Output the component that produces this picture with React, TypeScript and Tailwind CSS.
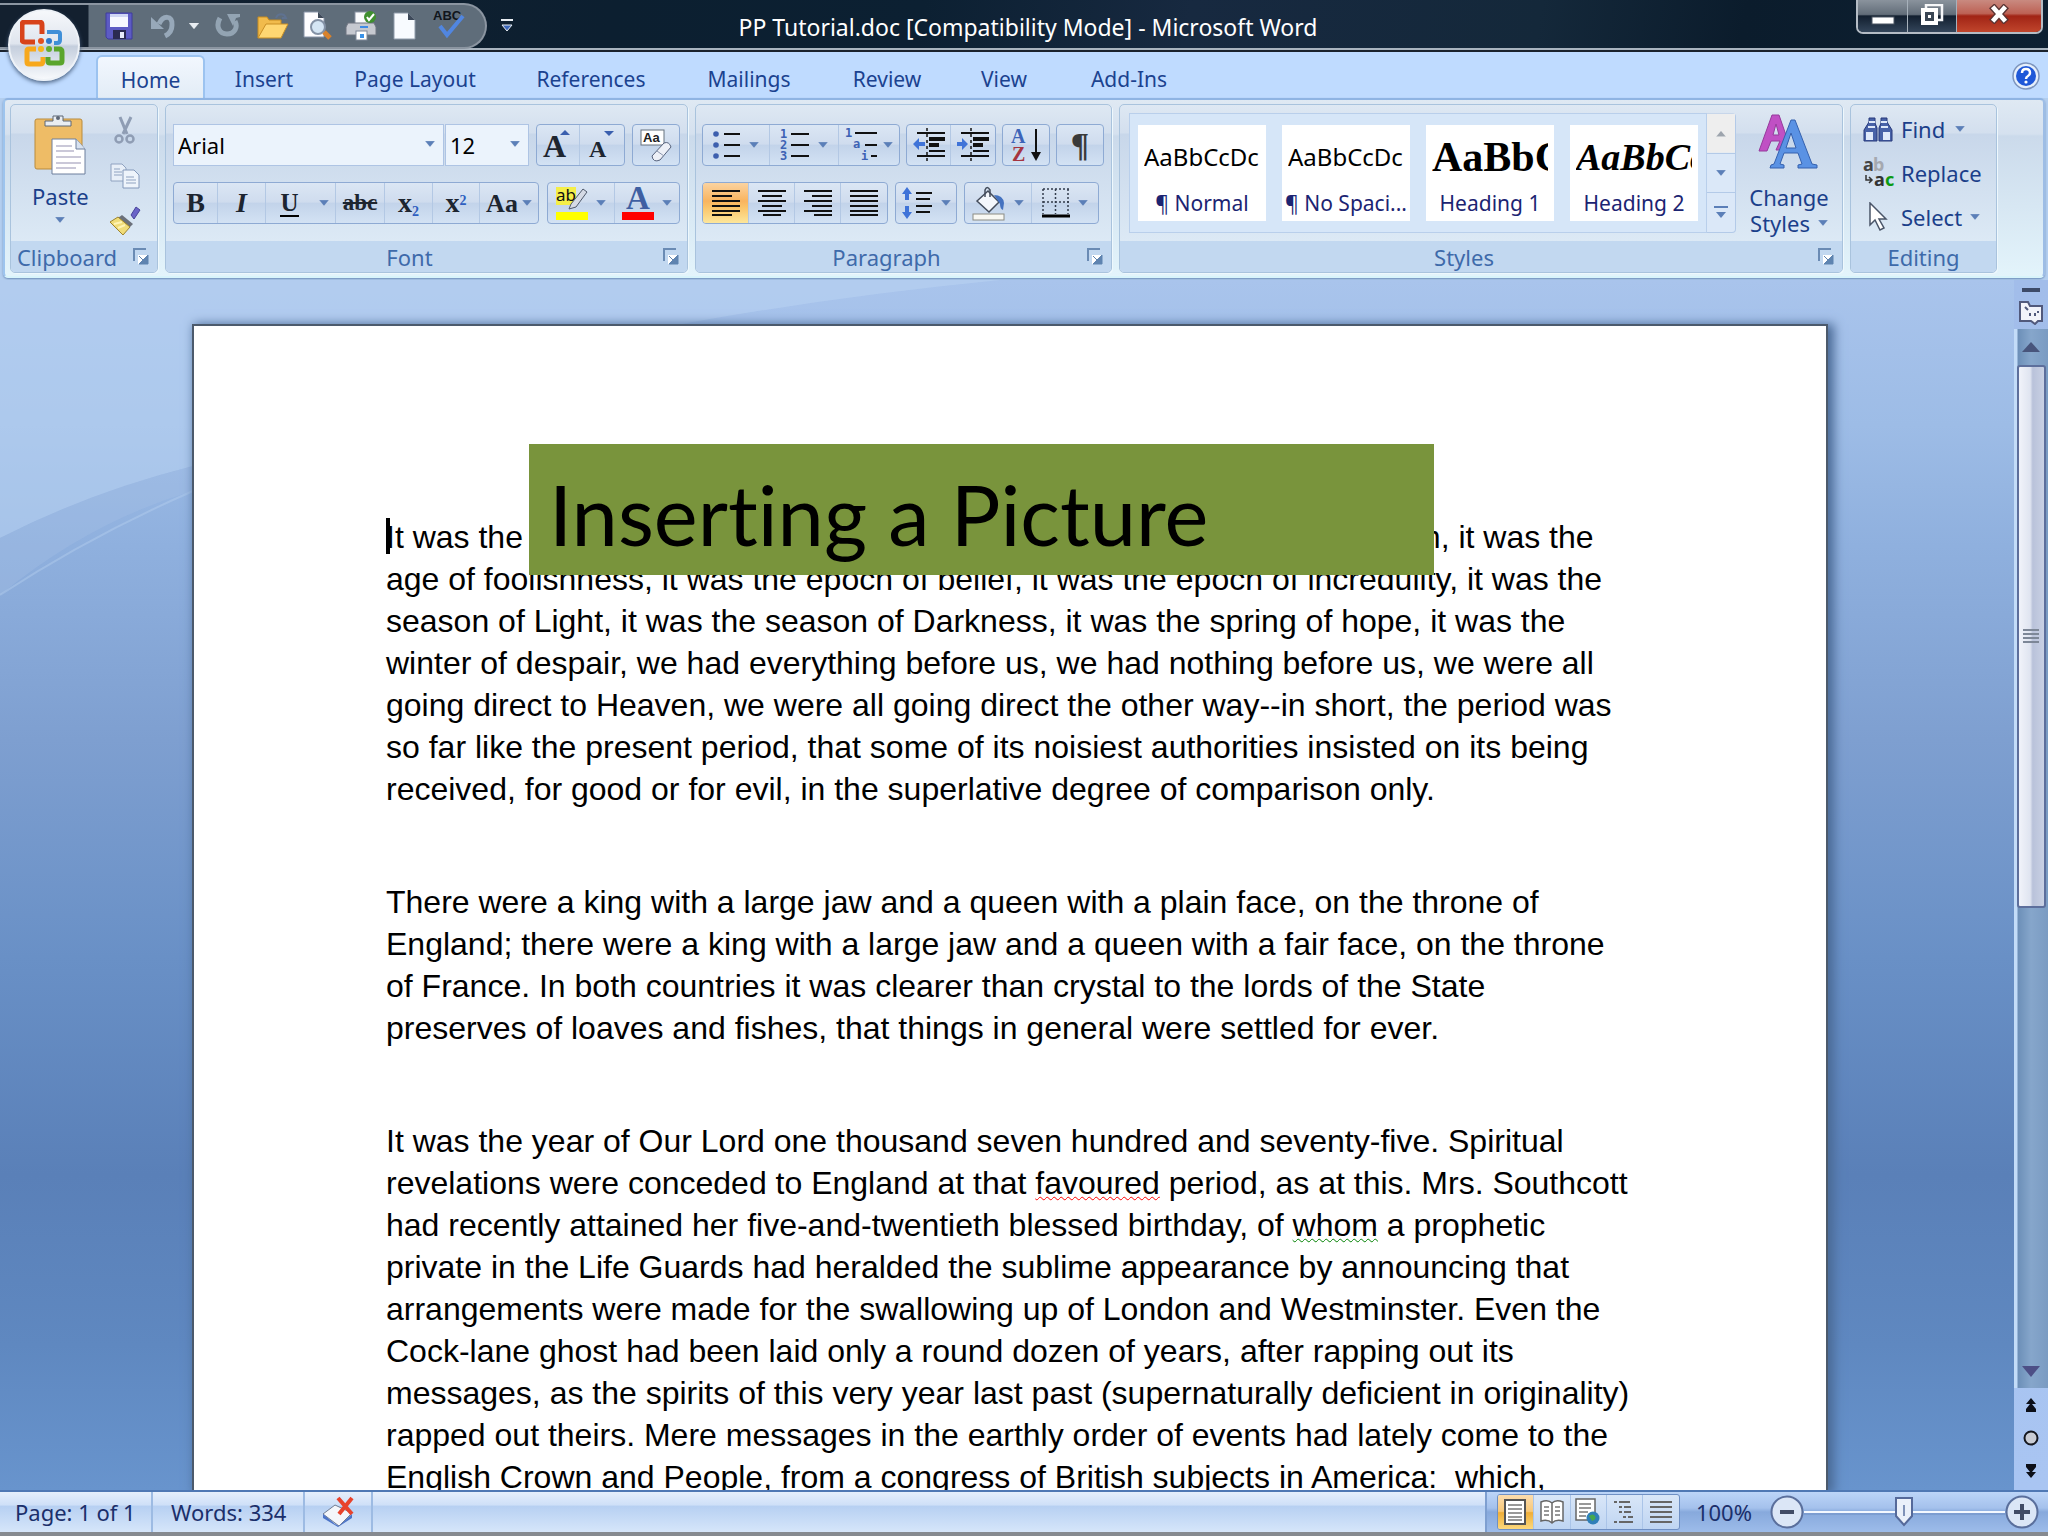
import { useState } from 'react';
import type { ReactNode } from 'react';

const tabs = ['Home', 'Insert', 'Page Layout', 'References', 'Mailings', 'Review', 'View', 'Add-Ins'];

const styleCards = [
  { name: '¶ Normal', sample: 'AaBbCcDc', font: 'font-["Noto_Sans",sans-serif] text-[24px]' },
  { name: '¶ No Spaci...', sample: 'AaBbCcDc', font: 'font-["Noto_Sans",sans-serif] text-[24px]' },
  { name: 'Heading 1', sample: 'AaBbCc', font: 'font-["Liberation_Serif",serif] text-[42px] font-bold' },
  { name: 'Heading 2', sample: 'AaBbCc', font: 'font-["Liberation_Serif",serif] text-[38px] font-bold italic' },
];

const paragraphs: ReactNode[][] = [
  [
    'It was the best of times, it was the worst of times, it was the age of wisdom, it was the',
    'age of foolishness, it was the epoch of belief, it was the epoch of incredulity, it was the',
    'season of Light, it was the season of Darkness, it was the spring of hope, it was the',
    'winter of despair, we had everything before us, we had nothing before us, we were all',
    'going direct to Heaven, we were all going direct the other way--in short, the period was',
    'so far like the present period, that some of its noisiest authorities insisted on its being',
    'received, for good or for evil, in the superlative degree of comparison only.',
  ],
  [
    'There were a king with a large jaw and a queen with a plain face, on the throne of',
    'England; there were a king with a large jaw and a queen with a fair face, on the throne',
    'of France. In both countries it was clearer than crystal to the lords of the State',
    'preserves of loaves and fishes, that things in general were settled for ever.',
  ],
  [
    'It was the year of Our Lord one thousand seven hundred and seventy-five. Spiritual',
    <>
      revelations were conceded to England at that{' '}
      <span className="underline decoration-wavy decoration-[#ff0000] decoration-1 underline-offset-2">favoured</span> period, as at this. Mrs. Southcott
    </>,
    <>
      had recently attained her five-and-twentieth blessed birthday, of{' '}
      <span className="underline decoration-wavy decoration-[#008000] decoration-1 underline-offset-2">whom</span> a prophetic
    </>,
    'private in the Life Guards had heralded the sublime appearance by announcing that',
    'arrangements were made for the swallowing up of London and Westminster. Even the',
    'Cock-lane ghost had been laid only a round dozen of years, after rapping out its',
    'messages, as the spirits of this very year last past (supernaturally deficient in originality)',
    'rapped out theirs. Mere messages in the earthly order of events had lately come to the',
    'English Crown and People, from a congress of British subjects in America:  which,',
  ],
];

function Caret({ color = '#5b7fb8' }: { color?: string }) {
  return (
    <svg width="10" height="7" viewBox="0 0 10 7" className="shrink-0">
      <path d="M0 0h10L5 6z" fill={color} />
      <path d="M0 0h10L5 6z" fill="none" stroke="#ffffff" strokeOpacity=".35" strokeWidth=".6" />
    </svg>
  );
}

/* ---------- quick access icons ---------- */

function SaveIcon() {
  return (
    <svg width="28" height="28" viewBox="0 0 28 28">
      <path d="M1 1h26v26H3l-2-2z" fill="#5d5bc4" stroke="#3f3d9c" />
      <rect x="5" y="2" width="18" height="13" fill="#f6f8ff" />
      <rect x="5" y="2" width="18" height="3" fill="#cfd6f4" />
      <rect x="8" y="18" width="13" height="9" fill="#2b2a52" />
      <rect x="15" y="20" width="4" height="6" fill="#e8ebfa" />
    </svg>
  );
}

function UndoIcon() {
  return (
    <svg width="26" height="28" viewBox="0 0 26 28">
      <path d="M8 12C12 3 22 3 21 13c0 5-3 9-7 11" fill="none" stroke="#97a8b9" strokeWidth="5" />
      <path d="M0 5v12h13z" fill="#97a8b9" />
    </svg>
  );
}

function RedoIcon() {
  return (
    <svg width="26" height="28" viewBox="0 0 26 28">
      <path d="M5 6C0 15 5 22 12 22c8 0 11-7 8-13" fill="none" stroke="#93a4b3" strokeWidth="5" />
      <path d="M12 2h13v3l-4 1-3 8z" fill="#93a4b3" />
    </svg>
  );
}

function FolderIcon() {
  return (
    <svg width="32" height="28" viewBox="0 0 32 28">
      <path d="M19 6c2-5 8-5 10 0l-4 0" fill="none" stroke="#5f7290" strokeWidth="2" />
      <path d="M1 26V5h9l2 3h12v5" fill="#f1bb4c" stroke="#c68c20" />
      <path d="M1 26 9 12h22l-7 14z" fill="#ffd772" stroke="#c98f25" />
    </svg>
  );
}

function PreviewIcon() {
  return (
    <svg width="30" height="30" viewBox="0 0 30 30">
      <path d="M1 1h14l6 6v19H1z" fill="#fdfdff" stroke="#8894a8" />
      <path d="M15 1v6h6z" fill="#3f4a59" />
      <circle cx="15" cy="16" r="7" fill="#cfe2f3" fillOpacity=".9" stroke="#8492a6" strokeWidth="2" />
      <path d="m21 21 6 6" stroke="#d9822b" strokeWidth="5" />
    </svg>
  );
}

function PrintIcon() {
  return (
    <svg width="32" height="30" viewBox="0 0 32 30">
      <rect x="10" y="1" width="13" height="12" fill="#fafbfd" stroke="#8a94a3" />
      <path d="M3 12h26l2 4v8H1v-8z" fill="#c6c9d0" stroke="#6e7480" />
      <rect x="15" y="15" width="8" height="2" fill="#3f8be6" />
      <rect x="11" y="20" width="11" height="9" fill="#fff" stroke="#7e8898" />
      <rect x="15" y="23" width="4" height="4" fill="#3a92e8" />
      <circle cx="25" cy="6" r="6" fill="#3f8f2f" />
      <path d="m22 6 2 3 5-6" fill="none" stroke="#fff" strokeWidth="2" />
    </svg>
  );
}

function NewIcon() {
  return (
    <svg width="24" height="30" viewBox="0 0 24 30">
      <path d="M1 2h14l7 7v19H1z" fill="#f8fbff" stroke="#909cab" />
      <path d="M15 2v7h7z" fill="#3e4a5a" />
    </svg>
  );
}

function SpellIcon() {
  return (
    <span className="relative block h-[28px] w-[34px]">
      <span className="absolute -top-1 left-0 font-['Liberation_Sans',sans-serif] text-[13px] leading-[16px] font-bold text-[#10151c]">ABC</span>
      <svg width="34" height="28" viewBox="0 0 34 28" className="absolute top-0 left-0">
        <path d="m7 14 7 9L30 4" fill="none" stroke="#5186e0" strokeWidth="4" />
      </svg>
    </span>
  );
}

/* ---------- ribbon icons ---------- */

function PasteIcon() {
  return (
    <svg width="52" height="62" viewBox="0 0 52 62">
      <rect x="1" y="6" width="47" height="50" rx="2" fill="#eebc66" stroke="#b98b3d" />
      <path d="M11 13V8h8V3h10v5h8v5z" fill="#e9edf2" stroke="#5d6675" />
      <circle cx="24" cy="5" r="2" fill="#5d6675" />
      <path d="M18 26h24l9 10v25H18z" fill="#fff" stroke="#6d7f9c" />
      <path d="M42 26v10h9" fill="#d7e2f0" stroke="#6d7f9c" />
      <path d="M22 33h16M22 38h18M22 44h25M22 50h25M22 55h20" stroke="#b9b6cc" strokeWidth="1.5" />
    </svg>
  );
}

function CutIcon() {
  return (
    <svg width="22" height="30" viewBox="0 0 22 30">
      <path d="M6 1l7 17M17 1 9 18" stroke="#8f9db4" strokeWidth="3" />
      <circle cx="5" cy="23" r="3.5" fill="none" stroke="#8f9db4" strokeWidth="2.5" />
      <circle cx="16" cy="23" r="3.5" fill="none" stroke="#8f9db4" strokeWidth="2.5" />
    </svg>
  );
}

function CopyIcon() {
  return (
    <svg width="30" height="26" viewBox="0 0 30 26">
      <path d="M1 1h11l4 4v13H1z" fill="#e8eff8" stroke="#8fa2c0" />
      <path d="M13 7h11l5 5v13H13z" fill="#eef4fb" stroke="#8398ba" />
      <path d="M4 6h6M4 9h8M4 12h8M16 14h8M16 17h10M16 20h10" stroke="#8fa2c0" />
    </svg>
  );
}

function PainterIcon() {
  return (
    <svg width="32" height="30" viewBox="0 0 32 30">
      <path d="M22 9l5-8 4 3-6 9z" fill="#6a64c8" stroke="#484499" />
      <path d="M13 9l11 9-4 4L9 12z" fill="#6b707a" />
      <path d="M9 11 1 16l13 13 7-8z" fill="#f0dc78" stroke="#9e842c" />
      <path d="m5 18 8-2M9 22l7-3" stroke="#fff3b4" strokeWidth="2" />
    </svg>
  );
}

function EraserIcon() {
  return (
    <svg width="32" height="36" viewBox="0 0 32 36">
      <rect x="1" y="3" width="23" height="15" fill="#fff" stroke="#67727f" />
      <text x="3" y="15" className="font-['Liberation_Sans',sans-serif] text-[13px] font-bold" fill="#222">
        Aa
      </text>
      <path d="m12 29 12-13q5-2 7 4L20 33q-7 3-8-4z" fill="#edf0f7" stroke="#56627c" />
      <path d="m17 24 7 5" stroke="#8a95ad" />
    </svg>
  );
}

function BulletsIcon() {
  return (
    <svg width="28" height="30" viewBox="0 0 28 30">
      <path d="M11 4h16M11 15h16M11 26h16" stroke="#111" strokeWidth="2" />
      <circle cx="3" cy="4" r="2.8" fill="#3d5fae" />
      <circle cx="3" cy="15" r="2.8" fill="#3d5fae" />
      <circle cx="3" cy="26" r="2.8" fill="#3d5fae" />
    </svg>
  );
}

function NumberingIcon() {
  return (
    <svg width="30" height="32" viewBox="0 0 30 32" fill="#3d62b4" className="font-['DejaVu_Sans_Mono',monospace] text-[12px] font-bold">
      <path d="M11 5h18M11 16h18M11 27h18" stroke="#111" strokeWidth="2" />
      <text x="0" y="9">1</text>
      <text x="0" y="20">2</text>
      <text x="0" y="31">3</text>
    </svg>
  );
}

function MultilevelIcon() {
  return (
    <svg width="34" height="34" viewBox="0 0 34 34" fill="#3d62b4" className="font-['DejaVu_Sans_Mono',monospace] text-[12px] font-bold">
      <path d="M10 5h22M20 17h12M26 28h6" stroke="#111" strokeWidth="2" />
      <text x="0" y="9">1</text>
      <text x="8" y="20">a</text>
      <text x="16" y="32">i</text>
    </svg>
  );
}

function IndentIcon({ flip = false }: { flip?: boolean }) {
  return (
    <svg width="34" height="34" viewBox="0 0 34 34">
      <path d="M5 5h28M17 17h10M17 23h16M5 28h28" stroke="#111" strokeWidth="2" />
      <path d="M17 11h16M17 17h10" stroke="#111" strokeWidth="4" />
      <path d="M15 0v34" stroke="#111" strokeWidth="1.5" strokeDasharray="3 3" />
      <path d={flip ? 'M12 16 6 10v4H1v4h5v4z' : 'M1 16l6-6v4h6v4H7v4z'} fill="#3f73d8" />
    </svg>
  );
}

function SortIcon() {
  return (
    <svg width="30" height="36" viewBox="0 0 30 36" className="font-['Liberation_Serif',serif] text-[20px] font-bold">
      <text x="0" y="16" fill="#3c64b8">A</text>
      <text x="1" y="34" fill="#a53440">Z</text>
      <path d="M25 2v26" stroke="#111" strokeWidth="2" />
      <path d="M20 25h10l-5 9z" fill="#111" />
    </svg>
  );
}

const alignLines: Record<string, string> = {
  left: 'M0 1h28M0 6h20M0 11h28M0 16h28M0 21h28M0 25h20',
  center: 'M0 1h28M4 6h20M0 11h28M4 16h20M0 21h28M5 25h18',
  right: 'M0 1h28M8 6h20M0 11h28M8 16h20M0 21h28M10 25h18',
  justify: 'M0 1h28M0 6h28M0 11h28M0 16h28M0 21h28M0 25h28',
};

function AlignIcon({ kind }: { kind: string }) {
  return (
    <svg width="28" height="27" viewBox="0 0 28 27">
      <path d={alignLines[kind]} stroke="#111" strokeWidth="2" />
    </svg>
  );
}

function SpacingIcon() {
  return (
    <svg width="32" height="34" viewBox="0 0 32 34">
      <path d="M15 7h16M15 13h14M15 20h16M15 26h14" stroke="#111" strokeWidth="2" />
      <path d="M6 1 1 8h3v6h4V8h3zM6 33l-5-7h3v-6h4v6h3z" fill="#3f73d8" />
    </svg>
  );
}

function ShadingIcon() {
  return (
    <svg width="34" height="36" viewBox="0 0 34 36">
      <path d="m5 16 11-10 11 11-10 10z" fill="#f4f7fc" stroke="#444d5c" strokeWidth="1.5" />
      <path d="M13 12V5q2-5 5 0v7" fill="none" stroke="#444d5c" strokeWidth="1.5" />
      <path d="M22 10q9 0 10 8l-1 7q-3-1-3-6z" fill="#4472c0" />
      <rect x="1" y="29" width="31" height="6" fill="#f8f8f3" stroke="#8c8c84" />
    </svg>
  );
}

function BordersIcon() {
  return (
    <svg width="28" height="30" viewBox="0 0 28 30">
      <path d="M1 1v25M13.5 1v25M26 1v25M1 1h26M1 14h26" stroke="#333c4c" strokeWidth="1.5" strokeDasharray="2 2" />
      <path d="M0 28h28" stroke="#000" strokeWidth="3" />
    </svg>
  );
}

function HighlightIcon() {
  return (
    <svg width="32" height="34" viewBox="0 0 32 34">
      <rect x="0" y="1" width="20" height="18" fill="#f4ee48" />
      <text x="0" y="15" className="font-['Noto_Sans',sans-serif] text-[17px] font-normal" fill="#111">
        ab
      </text>
      <path d="m15 18 12-15 4 3-11 15-7 2z" fill="#d5dae5" stroke="#4f596b" />
      <rect x="0" y="26" width="32" height="8" fill="#ffff00" />
    </svg>
  );
}

function FontColorIcon() {
  return (
    <svg width="32" height="36" viewBox="0 0 32 36">
      <text x="16" y="24" textAnchor="middle" className="font-['Liberation_Serif',serif] text-[33px] font-bold" fill="#3f5fa2">
        A
      </text>
      <rect x="0" y="27" width="32" height="8" fill="#ff0000" />
    </svg>
  );
}

function ChangeStylesIcon() {
  return (
    <svg width="62" height="58" viewBox="0 0 62 58">
      <path d="M1 38 14 2h7l9 26-5 9-7 0 4-9H13l-4 10zM15 22h6l-3-11z" fill="#c050c4" stroke="#963a9c" />
      <path d="M13 52l3-1L33 7h4l17 44 5 1v3H40v-3l4-1-4-11H26l-4 11 4 1v3H12zM28 35h10l-5-15z" fill="#5a92e4" stroke="#3561ae" />
    </svg>
  );
}

function FindIcon() {
  return (
    <svg width="30" height="28" viewBox="0 0 30 28">
      <path d="M1 26V15l5-8V3h6v5l2 5v13zM29 26V15l-5-8V3h-6v5l-2 5v13z" fill="#4862a8" stroke="#26387a" />
      <rect x="3" y="17" width="7" height="8" fill="#dfe9fa" />
      <rect x="20" y="17" width="7" height="8" fill="#dfe9fa" />
      <path d="M6 7h6M18 7h6M5 12h7M18 12h7" stroke="#dfe9fa" strokeWidth="2" />
    </svg>
  );
}

function ReplaceIcon() {
  return (
    <svg width="32" height="32" viewBox="0 0 32 32" className="font-['Noto_Sans',sans-serif] text-[18px] font-bold">
      <text x="0" y="14" fill="#444">a</text>
      <text x="10" y="14" fill="#a5a9b0">b</text>
      <text x="11" y="29" fill="#333">a</text>
      <text x="22" y="29" fill="#0b9a12">c</text>
      <path d="M3 18v5h5M6 20l3 3-3 3" fill="none" stroke="#333" strokeWidth="1.5" />
    </svg>
  );
}

function SelectIcon() {
  return (
    <svg width="22" height="30" viewBox="0 0 22 30">
      <path d="M2 1v22l5-5 5 10 4-2-5-9h7z" fill="#fff" stroke="#4a5568" strokeWidth="1.5" />
    </svg>
  );
}

function OfficeLogo() {
  return (
    <svg width="48" height="50" viewBox="0 0 48 50" fill="none">
      <path d="M15 22H5Q2 22 2 19V5q0-3 3-3h14q3 0 3 3v9" stroke="#d8431b" strokeWidth="5" />
      <path d="M27 12h11q2 0 2 2v6q0 3-3 3h-3" stroke="#3f8fd8" strokeWidth="4" />
      <path d="M16 29H9q-2 0-2 2v11q0 2 2 2h11q3 0 3-3v-4" stroke="#f7a81c" strokeWidth="5" />
      <path d="M34 29h5q3 0 3 3v9q0 2-2 2H30q-2 0-2-2v-4" stroke="#5aa52c" strokeWidth="5" />
      <circle cx="21" cy="21" r="3" fill="#e2501e" />
      <circle cx="29" cy="21" r="3" fill="#2c78cc" />
      <circle cx="21" cy="29" r="3" fill="#f7b61c" />
      <circle cx="29" cy="29" r="3" fill="#63ad2e" />
    </svg>
  );
}

/* ---------- building blocks ---------- */

function ButtonSet({ children }: { children: ReactNode }) {
  return (
    <div className="flex h-[42px] divide-x divide-[#b3c8e4] overflow-hidden rounded-[4px] border border-[#8eaad3] bg-[linear-gradient(to_bottom,#dbe6f4_0%,#cfdcee_48%,#c2d3ea_50%,#d3e2f4_100%)]">
      {children}
    </div>
  );
}

function Tool({ label, width, children }: { label: string; width: string; children: ReactNode }) {
  return (
    <button aria-label={label} className={`flex items-center justify-center gap-2 ${width}`}>
      {children}
    </button>
  );
}

function Group({ title, width, launcher, children }: { title: string; width: string; launcher?: boolean; children: ReactNode }) {
  return (
    <section
      aria-label={title}
      className={`flex h-[169px] flex-col rounded-[5px] border border-[#a9c3dd] bg-[linear-gradient(to_bottom,#dee8f3_0px,#d3dfee_28px,#c8d7ea_29px,#dce9f5_136px)] shadow-[1px_1px_0_#eef8fd] ${width}`}
    >
      <div className="flex-1">{children}</div>
      <footer className="flex h-[31px] items-center rounded-b-[4px] bg-[#c2d8f0] px-1">
        <span className="flex-1 text-center text-[22px] leading-[28px] text-[#3e6aaa]">{title}</span>
        {launcher && (
          <button aria-label={`${title} options`} className="pr-1 pl-[14px]">
            <svg width="16" height="17" viewBox="0 0 16 17">
              <path d="M1 13V1h12" fill="none" stroke="#6a8bb4" strokeWidth="2" />
              <path d="M5 7h9v9H5z" fill="#fff" />
              <path d="m6 8 4 4M15 7v9H6z" fill="#5f84b0" stroke="#5f84b0" />
            </svg>
          </button>
        )}
      </footer>
    </section>
  );
}

function ComboBox({ label, value, width }: { label: string; value: string; width: string }) {
  return (
    <div className={`relative ${width}`}>
      <select aria-label={label} className="h-[42px] w-full appearance-none border border-[#aec4e4] bg-[#ebf3fc] pl-1 text-[22px] text-black" defaultValue={value}>
        <option>{value}</option>
      </select>
      <span className="pointer-events-none absolute top-[17px] right-[9px]">
        <Caret />
      </span>
    </div>
  );
}

/* ---------- page parts ---------- */

function TitleBar() {
  return (
    <header className="relative flex h-[52px] shrink-0 items-start justify-between border-b-2 border-[#1a222c] bg-[linear-gradient(100deg,#13202f_0%,#0c1f30_30%,#0c2032_45%,#172940_58%,#14283a_75%,#0b1c2c_85%,#0d2032_100%)] shadow-[inset_0_-2px_0_#a9b4bf]">
      <div className="flex h-[50px] items-center pt-[2px]">
        <div className="flex h-[46px] w-[487px] items-center rounded-r-[24px] border-2 border-l-0 border-[#8b95a1] bg-[linear-gradient(to_right,#13202f_0px,#13202f_88px,#5f6d7a_89px)] pl-[105px]">
          <button aria-label="Save"><SaveIcon /></button>
          <button aria-label="Undo" className="ml-[18px]"><UndoIcon /></button>
          <button aria-label="Undo list" className="ml-[12px]"><Caret color="#e8edf2" /></button>
          <button aria-label="Repeat" className="ml-[16px]"><RedoIcon /></button>
          <button aria-label="Open" className="ml-[16px]"><FolderIcon /></button>
          <button aria-label="Print Preview" className="ml-[14px]"><PreviewIcon /></button>
          <button aria-label="Quick Print" className="ml-[12px]"><PrintIcon /></button>
          <button aria-label="New" className="ml-[16px]"><NewIcon /></button>
          <button aria-label="Spelling" className="ml-[16px]"><SpellIcon /></button>
        </div>
        <button aria-label="Customize Quick Access Toolbar" className="ml-[14px]">
          <svg width="12" height="14" viewBox="0 0 12 14">
            <path d="M0 1h12" stroke="#e8edf2" strokeWidth="2" />
            <path d="M1 6h10l-5 6z" fill="#3b66b8" stroke="#e8edf2" />
          </svg>
        </button>
      </div>
      <h1 className="absolute inset-x-0 top-[11px] mx-auto w-fit pl-2 text-[23px] leading-[32px] whitespace-pre text-white">
        PP Tutorial.doc [Compatibility Mode] - Microsoft Word
      </h1>
      <div className="mr-[5px] flex h-[34px] divide-x divide-[#a7b1bb] overflow-hidden rounded-b-[7px] border-2 border-t-0 border-[#b4bcc5]">
        <button aria-label="Minimize" className="flex w-[50px] items-end justify-center bg-[linear-gradient(to_bottom,#8a939d_0%,#626d79_45%,#121f2f_50%,#33455a_100%)] pb-[7px]">
          <svg width="24" height="9" viewBox="0 0 24 9">
            <rect x="1" y="1" width="22" height="7" fill="#fff" stroke="#4a5562" />
          </svg>
        </button>
        <button aria-label="Restore" className="flex w-[49px] items-center justify-center bg-[linear-gradient(to_bottom,#8a939d_0%,#626d79_45%,#121f2f_50%,#33455a_100%)] pb-[3px]">
          <svg width="24" height="22" viewBox="0 0 24 22">
            <path d="M6 4V1h16v15h-4" fill="none" stroke="#f5f6f8" strokeWidth="2.5" />
            <path d="M3 6h13v13H3z" fill="#3a4654" stroke="#fff" strokeWidth="4" />
            <rect x="8" y="11" width="3" height="3" fill="#fff" />
          </svg>
        </button>
        <button aria-label="Close" className="flex w-[84px] items-center justify-center bg-[linear-gradient(to_bottom,#c98a80_0%,#bd6255_42%,#a12415_50%,#c0452c_100%)] pb-[4px]">
          <svg width="22" height="20" viewBox="0 0 24 22">
            <path d="m4 2 16 18M20 2 4 20" stroke="#5a3433" strokeWidth="8" />
            <path d="m5 3 14 16M19 3 5 19" stroke="#fff" strokeWidth="5" />
          </svg>
        </button>
      </div>
      <button
        aria-label="Office Button"
        className="absolute top-[9px] left-[8px] z-10 flex h-[72px] w-[72px] items-center justify-center rounded-full border-2 border-[#eef2f7] bg-[linear-gradient(to_bottom,#f6f8fb_0%,#dfe5ee_48%,#c4cedd_52%,#f7f9fc_100%)] shadow-[0_2px_4px_#4a6180]"
      >
        <OfficeLogo />
      </button>
    </header>
  );
}

const tabSpacing = ['w-[109px] ml-[96px]', 'w-[118px]', 'w-[184px]', 'w-[168px]', 'w-[148px]', 'w-[128px]', 'w-[106px]', 'w-[144px]'];

function TabBar({ current, onSelect }: { current: string; onSelect: (tab: string) => void }) {
  return (
    <nav className="flex h-[46px] shrink-0 items-end bg-[#bfdbff]">
      {tabs.map((tab, i) => (
        <button
          key={tab}
          onClick={() => onSelect(tab)}
          className={`h-[43px] pt-[4px] text-center text-[21px] leading-[38px] text-[#1b428f] ${tabSpacing[i]} ${
            tab === current ? 'rounded-t-[6px] border-2 border-b-0 border-[#9cc3f0] bg-[linear-gradient(to_bottom,#f2f7fe,#e2ecf6)] pt-[2px]' : ''
          }`}
        >
          {tab}
        </button>
      ))}
      <button aria-label="Help" className="mr-[8px] mb-[8px] ml-auto">
        <svg width="28" height="28" viewBox="0 0 28 28">
          <circle cx="14" cy="14" r="13" fill="#e6effb" stroke="#7c94bd" strokeWidth="1.5" />
          <circle cx="14" cy="14" r="10" fill="#1f58d8" />
          <path d="M10 11q0-4 4-4t4 4q0 2-2 3t-2 3" fill="none" stroke="#fff" strokeWidth="2.5" />
          <circle cx="14" cy="20" r="1.6" fill="#fff" />
        </svg>
      </button>
    </nav>
  );
}

function ClipboardGroup() {
  return (
    <Group title="Clipboard" width="w-[148px]" launcher>
      <div className="flex justify-between pt-[8px] pr-[16px] pl-[21px]">
        <button className="flex flex-col items-center text-[22px] leading-[30px] text-[#1b3f8a]">
          <PasteIcon />
          <span className="pt-[6px]">Paste</span>
          <span className="pt-[6px]"><Caret /></span>
        </button>
        <div className="flex flex-col items-center gap-[17px] pt-[3px]">
          <button aria-label="Cut"><CutIcon /></button>
          <button aria-label="Copy"><CopyIcon /></button>
          <button aria-label="Format Painter"><PainterIcon /></button>
        </div>
      </div>
    </Group>
  );
}

function FontGroup() {
  return (
    <Group title="Font" width="w-[523px]" launcher>
      <div className="flex flex-col gap-[16px] px-[7px] pt-[19px] font-['Liberation_Serif',serif] font-bold text-[#1d2530]">
        <div className="flex justify-between">
          <div className="flex gap-px font-['Noto_Sans',sans-serif] font-normal">
            <ComboBox label="Font" value="Arial" width="w-[271px]" />
            <ComboBox label="Font Size" value="12" width="w-[84px]" />
          </div>
          <ButtonSet>
            <Tool label="Grow Font" width="w-[43px]">
              <svg width="32" height="32" viewBox="0 0 32 32">
                <text x="1" y="28" className="text-[32px]" fill="#1d2530">A</text>
                <path d="M18 6h10l-5-5z" fill="#3a5fae" />
              </svg>
            </Tool>
            <Tool label="Shrink Font" width="w-[44px]">
              <svg width="32" height="32" viewBox="0 0 32 32">
                <text x="3" y="28" className="text-[24px]" fill="#1d2530">A</text>
                <path d="M18 2h10l-5 5z" fill="#3a5fae" />
              </svg>
            </Tool>
          </ButtonSet>
          <ButtonSet>
            <Tool label="Clear Formatting" width="w-[46px]"><EraserIcon /></Tool>
          </ButtonSet>
        </div>
        <div className="flex justify-between">
          <ButtonSet>
            <Tool label="Bold" width="w-[44px]"><span className="text-[28px]">B</span></Tool>
            <Tool label="Italic" width="w-[48px]"><span className="text-[28px] italic">I</span></Tool>
            <Tool label="Underline" width="w-[70px]">
              <span className="ml-2 border-b-2 border-black text-[25px] leading-[25px]">U</span>
              <span className="pl-3"><Caret /></span>
            </Tool>
            <Tool label="Strikethrough" width="w-[49px]"><span className="text-[23px] line-through">abc</span></Tool>
            <Tool label="Subscript" width="w-[48px]">
              <span className="text-[28px] leading-[40px]">x<sub className="text-[14px] text-[#2f5fc0]">2</sub></span>
            </Tool>
            <Tool label="Superscript" width="w-[47px]">
              <span className="text-[28px] leading-[40px]">x<sup className="text-[14px] text-[#2f5fc0]">2</sup></span>
            </Tool>
            <Tool label="Change Case" width="w-[58px]">
              <span className="-mr-1 text-[26px]">Aa</span>
              <Caret />
            </Tool>
          </ButtonSet>
          <ButtonSet>
            <Tool label="Highlight" width="w-[67px]"><HighlightIcon /><Caret /></Tool>
            <Tool label="Font Color" width="w-[64px]"><FontColorIcon /><Caret /></Tool>
          </ButtonSet>
        </div>
      </div>
    </Group>
  );
}

function ParagraphGroup() {
  const [align, setAlign] = useState('left');

  return (
    <Group title="Paragraph" width="w-[417px]" launcher>
      <div className="flex flex-col gap-[16px] px-[6px] pt-[19px]">
        <div className="flex gap-[6px]">
          <ButtonSet>
            <Tool label="Bullets" width="w-[67px]"><BulletsIcon /><Caret /></Tool>
            <Tool label="Numbering" width="w-[69px]"><NumberingIcon /><Caret /></Tool>
            <button aria-label="Multilevel List" className="flex w-[60px] items-center justify-center gap-1"><MultilevelIcon /><Caret /></button>
          </ButtonSet>
          <ButtonSet>
            <Tool label="Decrease Indent" width="w-[44px]"><IndentIcon /></Tool>
            <Tool label="Increase Indent" width="w-[44px]"><IndentIcon flip /></Tool>
          </ButtonSet>
          <ButtonSet>
            <Tool label="Sort" width="w-[46px]"><SortIcon /></Tool>
          </ButtonSet>
          <ButtonSet>
            <Tool label="Show Marks" width="w-[46px]">
              <span className="font-['Liberation_Serif',serif] text-[34px] leading-[36px] font-bold text-[#3a3a3a]">¶</span>
            </Tool>
          </ButtonSet>
        </div>
        <div className="flex gap-[7px]">
          <ButtonSet>
            {['left', 'center', 'right', 'justify'].map((kind) => (
              <button
                key={kind}
                aria-label={`Align ${kind}`}
                onClick={() => setAlign(kind)}
                className={`flex w-[46px] items-center justify-center ${align === kind ? 'bg-[linear-gradient(to_bottom,#fbd3a0_0%,#f9b45f_45%,#fbc368_60%,#fde69a_100%)]' : ''}`}
              >
                <AlignIcon kind={kind} />
              </button>
            ))}
          </ButtonSet>
          <ButtonSet>
            <Tool label="Line Spacing" width="w-[60px]"><SpacingIcon /><Caret /></Tool>
          </ButtonSet>
          <ButtonSet>
            <Tool label="Shading" width="w-[67px]"><ShadingIcon /><Caret /></Tool>
            <Tool label="Borders" width="w-[66px]"><BordersIcon /><Caret /></Tool>
          </ButtonSet>
        </div>
      </div>
    </Group>
  );
}

function StylesGroup() {
  return (
    <Group title="Styles" width="w-[724px]" launcher>
      <div className="flex pt-[8px] pl-[9px]">
        <div className="flex h-[120px] items-center gap-[16px] border border-[#b9cfeb] bg-[#d6e6f8] px-[8px]">
          {styleCards.map((card) => (
            <button key={card.name} className="h-[96px] w-[128px] bg-white">
              <span className={`mx-[6px] block h-[56px] overflow-hidden text-left leading-[64px] whitespace-nowrap text-black ${card.font}`}>{card.sample}</span>
              <span className="block pt-[4px] text-center text-[21px] leading-[36px] whitespace-nowrap text-[#1c2472]">{card.name}</span>
            </button>
          ))}
        </div>
        <div className="flex h-[120px] w-[29px] flex-col rounded-r-[4px] border border-l-0 border-[#b3cae8] bg-[#dbe8f8]">
          <button aria-label="Previous styles" className="flex flex-1 rotate-180 items-center justify-center bg-[#eeeeee]"><Caret color="#9da4ad" /></button>
          <button aria-label="Next styles" className="flex flex-1 items-center justify-center border-y border-[#b3cae8]"><Caret /></button>
          <button aria-label="More styles" className="flex flex-1 items-center justify-center">
            <svg width="14" height="14" viewBox="0 0 14 14">
              <path d="M0 1h14" stroke="#5b7fb8" strokeWidth="2" />
              <path d="M2 6h10l-5 6z" fill="#5b7fb8" />
            </svg>
          </button>
        </div>
        <button className="flex flex-1 flex-col items-center text-[22px] leading-[26px] text-[#1b3f8a]">
          <ChangeStylesIcon />
          <span className="pt-[13px]">Change</span>
          <span className="flex items-center gap-2">Styles <Caret /></span>
        </button>
      </div>
    </Group>
  );
}

function EditingGroup() {
  return (
    <Group title="Editing" width="w-[147px]">
      <div className="flex flex-col gap-[4px] pt-[4px] pl-[12px] text-[22px] leading-[40px] text-[#1b3f8a]">
        <button className="flex items-center">
          <span className="w-[38px]"><FindIcon /></span>Find<span className="pl-[10px]"><Caret /></span>
        </button>
        <button className="flex items-center">
          <span className="w-[38px]"><ReplaceIcon /></span>Replace
        </button>
        <button className="flex items-center">
          <span className="w-[38px] pl-[5px]"><SelectIcon /></span>Select<span className="pl-[8px]"><Caret /></span>
        </button>
      </div>
    </Group>
  );
}

function ScrollBar() {
  return (
    <aside className="flex w-[34px] shrink-0 flex-col items-center bg-[linear-gradient(to_bottom,#a2bdea,#a9c5f2)] pt-[8px]">
      <button aria-label="Split" className="h-[4px] w-[18px] bg-[#3d4a68]" />
      <button aria-label="View Ruler" className="mt-[7px]">
        <svg width="26" height="26" viewBox="0 0 26 26">
          <path d="M2 3h8l2 4h12v15h-4l-3 3-4-3H2z" fill="#f2f3fa" stroke="#51597c" strokeWidth="2" />
          <path d="m7 8 3 3M12 14v3M17 14v3M20 12v2" stroke="#51597c" strokeWidth="2" />
        </svg>
      </button>
      <div className="mt-[4px] flex w-full flex-1 flex-col items-center bg-[linear-gradient(to_right,#c3dcf8_0px,#c3dcf8_3px,#6c8fb8_4px,#86a6cb_50%,#7a9bc2_100%)]">
        <button aria-label="Scroll up" className="flex h-[36px] rotate-180 items-center">
          <svg width="18" height="10" viewBox="0 0 18 10"><path d="M0 0h18L9 10z" fill="#48557c" /></svg>
        </button>
        <div className="flex h-[543px] w-[29px] items-center justify-center rounded-[3px] border-2 border-[#5d6f9c] bg-[linear-gradient(to_right,#f1f3fa_0%,#dfe4f0_45%,#b9c2da_55%,#c9d1e4_100%)]">
          <svg width="16" height="15" viewBox="0 0 16 15">
            <path d="M0 1h16M0 5h16M0 9h16M0 13h16" stroke="#7d8797" strokeWidth="2" />
          </svg>
        </div>
        <button aria-label="Scroll down" className="mt-auto flex h-[34px] items-center">
          <svg width="18" height="11" viewBox="0 0 18 11"><path d="M0 0h18L9 11z" fill="#4d4f86" /></svg>
        </button>
      </div>
      <div className="flex h-[102px] flex-col items-center justify-between pt-[10px] pb-[12px]">
        <button aria-label="Previous page">
          <svg width="12" height="14" viewBox="0 0 12 14"><path d="M6 0l5 6H7l4 5v3H1v-3l4-5H1z" fill="#0c0f18" /></svg>
        </button>
        <button aria-label="Browse object">
          <svg width="16" height="16" viewBox="0 0 16 16"><circle cx="8" cy="8" r="6.5" fill="#c9ccd4" stroke="#14171f" strokeWidth="2" /></svg>
        </button>
        <button aria-label="Next page" className="rotate-180">
          <svg width="12" height="14" viewBox="0 0 12 14"><path d="M6 0l5 6H7l4 5v3H1v-3l4-5H1z" fill="#0c0f18" /></svg>
        </button>
      </div>
    </aside>
  );
}

function DocumentArea() {
  return (
    <div className="flex min-h-0 flex-1 bg-[linear-gradient(to_bottom,#a9c4ec_0%,#9dbce6_12%,#8fb0de_22%,#7e9fd0_38%,#6990c6_56%,#5a80b8_74%,#5f88c0_88%,#6894cd_100%)]">
      <div className="relative flex min-w-0 flex-1 overflow-hidden pt-[44px] pr-[186px] pl-[192px]">
        {/* soft wave behind the sheet */}
        <svg width="1000" height="330" viewBox="0 0 1000 330" className="absolute top-0 left-0">
          <path d="M0 0h1000q-500 50-807 186Q90 212 0 258z" fill="#b9d4f2" fillOpacity=".55" />
          <path d="M0 258q90-46 193-72v25Q90 241 0 315z" fill="#a5c1e6" fillOpacity=".35" />
          <path d="M0 315Q90 256 193 211" fill="none" stroke="#b9d2f0" strokeOpacity=".4" strokeWidth="2" />
        </svg>
        <article className="relative min-w-0 flex-1 border-2 border-b-0 border-[#4c5a6c] bg-white pt-[190px] pl-[192px] font-['Liberation_Sans',sans-serif] text-[32px] leading-[42px] text-black shadow-[4px_2px_10px_2px_#4a6a96]">
          <span className="absolute top-[192px] left-[192px] h-[36px] w-[4px] bg-black" />
          {paragraphs.map((lines, i) => (
            <p key={i} className="mb-[71px] whitespace-pre">
              {lines.map((line, j) => (
                <span key={j} className="block">{line}</span>
              ))}
            </p>
          ))}
          <div className="absolute top-[118px] left-[335px] h-[131px] w-[905px] bg-[#79943c] pl-[20px] font-['Lato',sans-serif] text-[83px] leading-[140px] whitespace-nowrap [font-variant-ligatures:none]">
            Inserting a Picture
          </div>
        </article>
      </div>
      <ScrollBar />
    </div>
  );
}

function StatusBar() {
  const [zoom, setZoom] = useState(50);

  return (
    <footer className="flex h-[46px] shrink-0 items-stretch border-t-2 border-b-4 border-t-[#4f78b4] border-b-[#868a90] bg-[linear-gradient(to_bottom,#e6effc_0%,#cfe0f8_32%,#b7d0f2_36%,#d6e6fa_100%)] text-[22px] text-[#1b2f6b]">
      <span className="flex w-[153px] items-center border-r-2 border-[#9dbbe3] pl-[15px]">Page: 1 of 1</span>
      <span className="flex w-[152px] items-center border-r-2 border-[#9dbbe3] pl-[18px]">Words: 334</span>
      <button aria-label="Proofing" className="flex w-[68px] items-center justify-center border-r-2 border-[#9dbbe3]">
        <svg width="34" height="32" viewBox="0 0 34 32">
          <path d="m2 18 12-9 17 8-13 13z" fill="#f4f6fa" stroke="#6f7c92" />
          <path d="m2 18 12 10 4 2 13-12v4L17 31 2 22z" fill="#4c74c8" />
          <path d="m17 2 14 16M31 2 18 18" stroke="#e8432c" strokeWidth="4" />
        </svg>
      </button>
      <div className="ml-auto flex items-center border-l-2 border-[#7e9fd0] bg-[linear-gradient(to_bottom,#bcd5f8_0%,#a4c1ec_40%,#87a9dc_50%,#9dbcea_100%)] pl-[10px]">
        <div className="flex h-[36px] divide-x divide-[#aac4e8] overflow-hidden rounded-[3px] border border-[#6f90c4] bg-[linear-gradient(to_bottom,#d9e6f8,#bfd5f2)]">
          <button aria-label="Print Layout" className="flex w-[36px] items-center justify-center bg-[linear-gradient(to_bottom,#fbdcae_0%,#f8c878_48%,#efae38_52%,#fcd87c_100%)]">
            <svg width="22" height="26" viewBox="0 0 22 26">
              <rect x="1" y="1" width="20" height="24" fill="#fff" stroke="#555" strokeWidth="2" />
              <path d="M4 6h14M4 10h14M4 14h14M4 18h14M4 21h14" stroke="#777" strokeWidth="1.5" />
            </svg>
          </button>
          <button aria-label="Full Screen Reading" className="flex w-[37px] items-center justify-center">
            <svg width="24" height="26" viewBox="0 0 24 26">
              <path d="M1 3q7-3 11 1 4-4 11-1v19q-7-2-11 2-4-4-11-2zM12 4v20" fill="#fff" stroke="#666" strokeWidth="1.5" />
              <path d="M4 8h5M4 12h5M4 16h5M15 8h5M15 12h5M15 16h5" stroke="#777" strokeWidth="1.5" />
            </svg>
          </button>
          <button aria-label="Web Layout" className="flex w-[36px] items-center justify-center">
            <svg width="26" height="28" viewBox="0 0 26 28">
              <rect x="1" y="1" width="19" height="21" fill="#fff" stroke="#666" strokeWidth="1.5" />
              <path d="M4 6h12M4 10h12M4 14h9M4 18h7" stroke="#777" strokeWidth="1.5" />
              <circle cx="18" cy="20" r="6.5" fill="#2f7fb8" />
              <path d="M14 18q4-3 6 0t-3 5z" fill="#46a84e" />
            </svg>
          </button>
          <button aria-label="Outline" className="flex w-[36px] items-center justify-center">
            <svg width="20" height="24" viewBox="0 0 20 24">
              <path d="M0 2h3M5 2h11M5 7h3M10 7h7M5 12h3M10 12h7M9 17h3M14 17h5M0 22h3M5 22h14" stroke="#666" strokeWidth="2" />
            </svg>
          </button>
          <button aria-label="Draft" className="flex w-[36px] items-center justify-center">
            <svg width="22" height="24" viewBox="0 0 22 24">
              <path d="M0 2h22M0 7h22M0 12h22M0 17h22M0 22h22" stroke="#666" strokeWidth="2" />
            </svg>
          </button>
        </div>
        <button className="pr-[18px] pl-[16px]">100%</button>
        <button aria-label="Zoom out">
          <svg width="34" height="36" viewBox="0 0 34 36">
            <circle cx="17" cy="18" r="15.5" fill="#dbe6f6" stroke="#5a6f9c" strokeWidth="2" />
            <path d="M10 18h14" stroke="#414c66" strokeWidth="4" />
          </svg>
        </button>
        <div className="relative h-[36px] w-[201px]">
          <svg width="201" height="36" viewBox="0 0 201 36" className="absolute inset-0">
            <path d="M0 18h201" stroke="#f3f8ff" strokeWidth="2" />
            <path d="M0 20h201" stroke="#6f8fc4" />
            <path d="M92 4h16v18l-8 9-8-9z" fill="#eaf0fa" stroke="#55699a" strokeWidth="2" />
            <path d="M100 11v11" stroke="#7f92b8" strokeWidth="2" />
          </svg>
          <input
            type="range"
            aria-label="Zoom"
            value={zoom}
            onChange={(e) => setZoom(Number(e.target.value))}
            className="absolute inset-0 h-full w-full opacity-0"
          />
        </div>
        <button aria-label="Zoom in" className="mr-[9px]">
          <svg width="34" height="36" viewBox="0 0 34 36">
            <circle cx="17" cy="18" r="15.5" fill="#dbe6f6" stroke="#5a6f9c" strokeWidth="2" />
            <path d="M9 18h16M17 10v16" stroke="#414c66" strokeWidth="4" />
          </svg>
        </button>
      </div>
    </footer>
  );
}

export default function App() {
  const [tab, setTab] = useState('Home');

  return (
    <div className="flex h-screen flex-col overflow-hidden bg-[#bfdbff] font-['Noto_Sans',sans-serif]">
      <TitleBar />
      <TabBar current={tab} onSelect={setTab} />

      {/* ribbon */}
      <div className="bg-[#b3ceef] pr-[3px] pb-[2px] pl-[3px]">
        <div className="flex h-[180px] gap-[7px] rounded-[5px] border-2 border-t-[#8fb4e3] border-r-[#9dbde6] border-b-[#d8f4fb] border-l-[#9dc4ee] bg-[linear-gradient(to_bottom,#dfe9f3_0px,#d5e1ef_34px,#cbdaeb_36px,#e3f4fb_100%)] pt-[4px] pl-[5px] shadow-[0_1px_2px_#6d8db8]">
          <ClipboardGroup />
          <FontGroup />
          <ParagraphGroup />
          <StylesGroup />
          <EditingGroup />
        </div>
      </div>

      <DocumentArea />
      <StatusBar />
    </div>
  );
}
